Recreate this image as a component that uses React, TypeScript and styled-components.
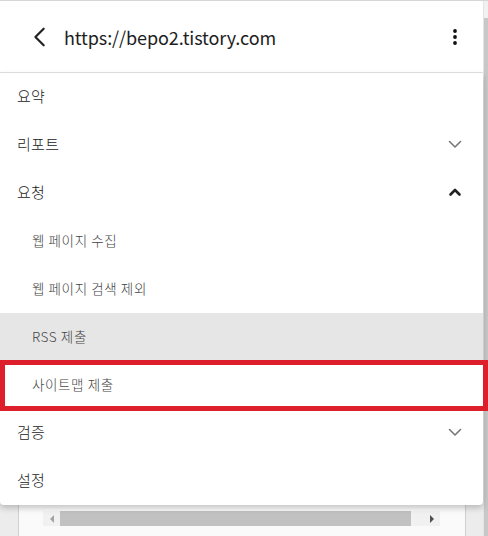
import React from "react";
import styled, { createGlobalStyle } from "styled-components";

const Global = createGlobalStyle`
  html, body { margin: 0; padding: 0; background: #ececec; }
  body { font-family: "Noto Sans CJK KR", "Noto Sans", sans-serif; }
  * { box-sizing: border-box; }
`;

const Page = styled.div`
  display: flex;
  width: 488px;
  height: 536px;
  overflow: hidden;
  border-top: 1px solid #d6d6d6;
`;

const Main = styled.div`
  flex: 1;
  display: flex;
  flex-direction: column;
  min-width: 0;
`;

const VScroll = styled.div`
  width: 5px;
  background: #f1f1f1;
  display: flex;
  flex-direction: column;
  padding-top: 17px;
  border-left: 1px solid #e4e4e4;
`;

const VThumb = styled.div`
  flex: 1;
  background: #c8c8c8;
`;

const Header = styled.header`
  height: 72px;
  background: #fff;
  border-bottom: 1px solid #e2e2e2;
  display: flex;
  align-items: center;
  padding: 0 17px 0 29px;
`;

const IconButton = styled.div`
  width: 22px;
  height: 22px;
  display: flex;
  align-items: center;
  justify-content: center;
  color: #212121;
`;

const Url = styled.div`
  flex: 1;
  margin-left: 13px;
  font-size: 18px;
  font-weight: 400;
  color: #1e1e1e;
  letter-spacing: -0.1px;
`;

const Menu = styled.nav`
  background: #fff;
  display: flex;
  flex-direction: column;
  position: relative;
  z-index: 2;
  box-shadow: 0 3px 6px rgba(0, 0, 0, 0.22);
  border-radius: 0 0 4px 4px;
`;

const Row = styled.div<{ $sub?: boolean; $active?: boolean }>`
  height: 48px;
  display: flex;
  align-items: center;
  padding: 0 16px 3px ${(p) => (p.$sub ? "32px" : "17px")};
  font-size: ${(p) => (p.$sub ? "13.5px" : "15px")};
  letter-spacing: ${(p) => (p.$sub ? "0.6px" : "0.3px")};
  font-weight: 300;
  color: ${(p) => (p.$sub ? "#444" : "#222")};
  background: ${(p) => (p.$active ? "#e6e6e6" : "transparent")};
  position: relative;
`;

const Label = styled.span`
  flex: 1;
`;

const Mark = styled.div`
  position: absolute;
  left: 0;
  right: -5px;
  top: -1px;
  bottom: -2px;
  border: 5px solid #dc1f2a;
  pointer-events: none;
`;

const Below = styled.div`
  flex: 1;
  display: flex;
  padding-left: 18px;
  padding-right: 17px;
`;

const Card = styled.div`
  flex: 1;
  background: #fafafa;
  border-left: 1px solid #cfcfcf;
  border-right: 1px solid #cfcfcf;
  padding: 6px 0 0 24px;
`;

const HScroll = styled.div`
  width: 397px;
  height: 15px;
  background: #f1f1f1;
  display: flex;
  align-items: center;
  padding: 0 2px;
`;

const Arrow = styled.div<{ $dir: "l" | "r" }>`
  width: 13px;
  height: 15px;
  display: flex;
  align-items: center;
  justify-content: center;
  &::before {
    content: "";
    border-top: 4px solid transparent;
    border-bottom: 4px solid transparent;
    ${(p) => (p.$dir === "l" ? "border-right: 4px solid #a3a3a3;" : "border-left: 4px solid #505050;")}
  }
`;

const HThumb = styled.div`
  flex: 1;
  height: 15px;
  margin: 0 14px 0 2px;
  background: #c1c1c1;
`;

const Chevron = ({ up, color }: { up?: boolean; color: string }) => (
  <svg width="24" height="24" viewBox="0 0 24 24">
    <path
      d={up ? "M7.5 14.5l4.5-4.5 4.5 4.5" : "M6.5 9.5l5.5 5.5 5.5-5.5"}
      fill="none"
      stroke={color}
      strokeWidth={up ? 2.6 : 1.6}
      strokeLinecap="round"
      strokeLinejoin="round"
    />
  </svg>
);

export default function App() {
  return (
    <>
      <Global />
      <Page>
        <Main>
          <Header>
            <IconButton>
              <svg width="22" height="22" viewBox="0 0 24 24">
                <path d="M16 3L7 12l9 9" fill="none" stroke="#212121" strokeWidth="2.4" strokeLinecap="round" strokeLinejoin="round" />
              </svg>
            </IconButton>
            <Url>https://bepo2.tistory.com</Url>
            <IconButton>
              <svg width="22" height="22" viewBox="0 0 22 22">
                <circle cx="11" cy="5" r="1.9" fill="#111" />
                <circle cx="11" cy="11" r="1.9" fill="#111" />
                <circle cx="11" cy="17" r="1.9" fill="#111" />
              </svg>
            </IconButton>
          </Header>
          <Menu>
            <Row><Label>요약</Label></Row>
            <Row><Label>리포트</Label><Chevron color="#777" /></Row>
            <Row><Label>요청</Label><Chevron up color="#222" /></Row>
            <Row $sub><Label>웹 페이지 수집</Label></Row>
            <Row $sub><Label>웹 페이지 검색 제외</Label></Row>
            <Row $sub $active><Label>RSS 제출</Label></Row>
            <Row $sub><Label>사이트맵 제출</Label><Mark /></Row>
            <Row><Label>검증</Label><Chevron color="#777" /></Row>
            <Row><Label>설정</Label></Row>
          </Menu>
          <Below>
            <Card>
              <HScroll>
                <Arrow $dir="l" />
                <HThumb />
                <Arrow $dir="r" />
              </HScroll>
            </Card>
          </Below>
        </Main>
        <VScroll>
          <VThumb />
        </VScroll>
      </Page>
    </>
  );
}
